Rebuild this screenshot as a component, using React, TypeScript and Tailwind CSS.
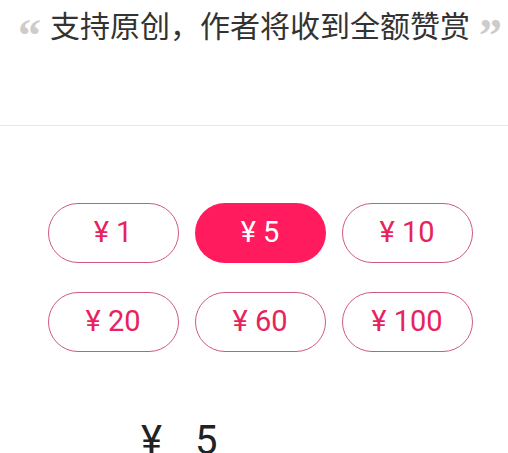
import { useState } from 'react';

const amounts = [1, 5, 10, 20, 60, 100];

export default function App() {
  const [selected, setSelected] = useState(5);

  return (
    <div
      className="w-[508px] h-[453px] overflow-hidden bg-white"
      style={{ fontFamily: 'Roboto, "Noto Sans CJK SC", sans-serif' }}>
      {/* Header */}
      <div className="h-[126px] border-b border-[#e6e6e6] pl-[12px] pt-[7px]">
        <div className="flex justify-center items-start gap-[9px]">
          <span
            className="text-[46px] leading-none font-bold text-[#cccccc] mt-[6px]"
            style={{ fontFamily: '"Liberation Serif", serif' }}>
            “
          </span>
          <span className="text-[30px] leading-[40px] text-[#333333]">
            支持原创，作者将收到全额赞赏
          </span>
          <span
            className="text-[46px] leading-none font-bold text-[#cccccc] mt-[6px]"
            style={{ fontFamily: '"Liberation Serif", serif' }}>
            ”
          </span>
        </div>
      </div>

      {/* Amount options */}
      <div className="pl-[12px] pt-[77px] flex justify-center">
        <div className="grid grid-cols-[131px_131px_131px] gap-x-[16px] gap-y-[29px]">
          {amounts.map((a) => {
            const active = a === selected;
            return (
              <button
                key={a}
                onClick={() => setSelected(a)}
                className={`h-[60px] rounded-full flex items-center justify-center text-[29px] ${
                  active
                    ? 'bg-[#ff1b5e] text-white'
                    : 'border border-[#cf5a80] text-[#e8225e] bg-white'
                }`}>
                ¥ {a}
              </button>
            );
          })}
        </div>
      </div>

      {/* Selected amount */}
      <div className="flex items-start pl-[141px] pt-[69px] text-[40px] leading-[40px] text-[#222222]">
        <span>¥</span>
        <span className="ml-[33px]">{selected}</span>
      </div>
    </div>
  );
}
